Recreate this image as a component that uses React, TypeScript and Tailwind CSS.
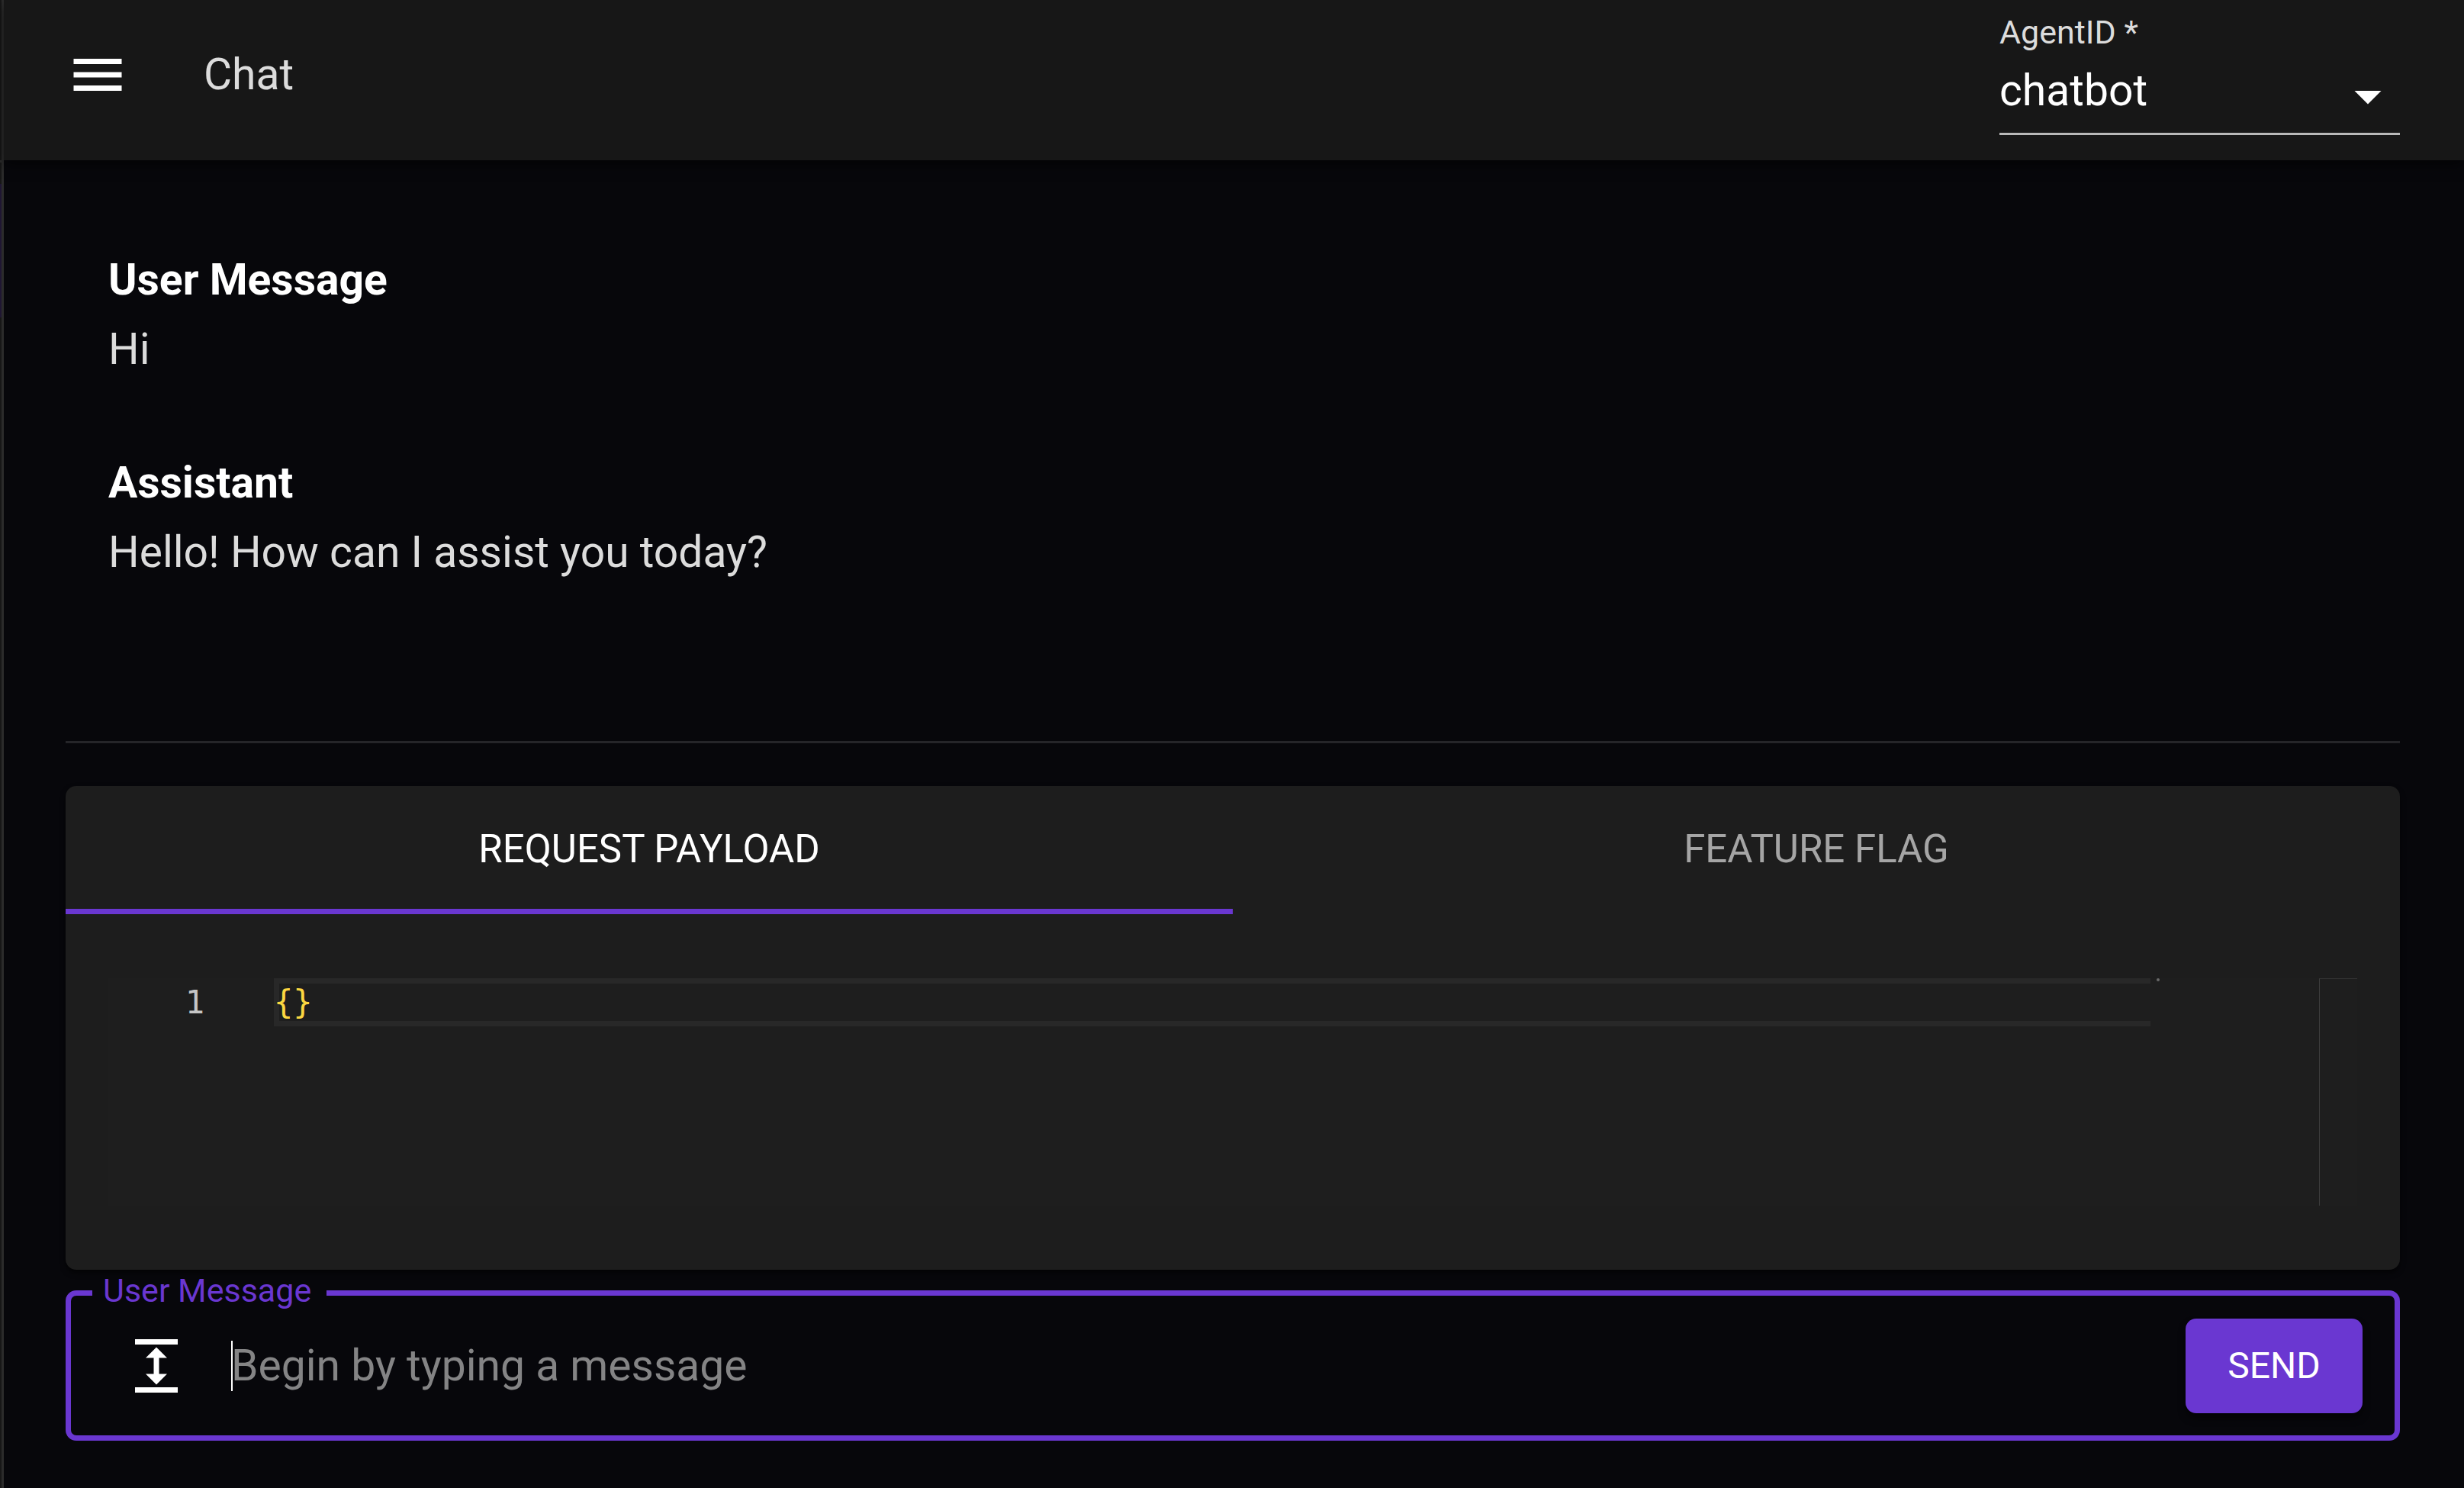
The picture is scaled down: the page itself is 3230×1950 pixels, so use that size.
import { useState } from "react";

function MenuIcon() {
  return (
    <svg viewBox="0 0 24 24" className="size-[84px] fill-white" aria-hidden="true">
      <path d="M3 18h18v-2H3v2zm0-5h18v-2H3v2zm0-7v2h18V6H3z" />
    </svg>
  );
}

function ArrowDropDownIcon() {
  return (
    <svg viewBox="0 0 24 24" className="pointer-events-none absolute right-0 bottom-[6px] size-[84px] fill-white" aria-hidden="true">
      <path d="M7 10l5 5 5-5z" />
    </svg>
  );
}

function ExpandIcon() {
  return (
    <svg viewBox="0 0 24 24" className="size-[84px] fill-white" aria-hidden="true">
      <path d="M4 20h16v2H4zM4 2h16v2H4zM13 9h3l-4-4-4 4h3v6H8l4 4 4-4h-3z" />
    </svg>
  );
}

function Header() {
  return (
    <header className="relative flex h-[210px] items-start justify-between bg-[#171717] pr-[84px] pl-[81px] shadow-[0_7px_14px_rgba(0,0,0,0.5)]">
      <div className="flex h-[196px] items-center gap-[97px]">
        <button type="button" aria-label="Open menu">
          <MenuIcon />
        </button>
        <h1 className="text-[57px] leading-[84px] text-[#dcdcdc]">Chat</h1>
      </div>
      <div className="relative mt-[12px] flex w-[525px] flex-col border-b-3 border-[#b9b9b9]">
        <label htmlFor="agent" className="text-[43px] leading-[60px] text-[#dcdcdc]">
          AgentID *
        </label>
        <select id="agent" required className="h-[102px] w-full appearance-none bg-transparent pb-[8px] text-[57px] leading-[84px] text-white outline-none">
          <option>chatbot</option>
        </select>
        <ArrowDropDownIcon />
      </div>
    </header>
  );
}

const messages = [
  { author: "User Message", text: "Hi" },
  { author: "Assistant", text: "Hello! How can I assist you today?" },
];

function Conversation() {
  return (
    <section className="flex flex-col gap-[84px] border-b-3 border-[#252529] px-[56px] pt-[111px] pb-[202px]">
      {messages.map((message) => (
        <article key={message.author} className="text-[57px] leading-[91px]">
          <h2 className="font-bold text-white">{message.author}</h2>
          <p className="text-[#dcdcdc]">{message.text}</p>
        </article>
      ))}
    </section>
  );
}

const tabs = ["Request Payload", "Feature Flag"];

function PayloadPanel() {
  const [active, setActive] = useState(0);
  return (
    <section className="rounded-[14px] bg-[#1d1d1d] shadow-[0_4px_7px_rgba(0,0,0,0.6)]">
      <div role="tablist" className="flex">
        {tabs.map((tab, index) => (
          <button
            key={tab}
            type="button"
            role="tab"
            aria-selected={index === active}
            onClick={() => setActive(index)}
            className="h-[168px] flex-1 border-b-7 border-transparent pt-1 text-[51px] leading-[60px] text-[#a5a5a5] uppercase aria-selected:border-[#6a37d1] aria-selected:text-white"
          >
            {tab}
          </button>
        ))}
      </div>
      <div className="px-[56px] py-[84px]">
        <div className="flex h-[298px] bg-[#1e1e1e] font-['DejaVu_Sans_Mono',monospace] text-[42px] leading-[63px]">
          <div className="w-[217px] pr-[91px] text-right text-[#c6c6c6]">1</div>
          <div className="relative h-[63px] flex-1 border-y-7 border-l-7 border-[#282828]">
            <code className="absolute -top-[7px] -left-[7px] font-['DejaVu_Sans_Mono',monospace] text-[#fbd741]">{"{}"}</code>
          </div>
          <div className="w-[221px] pl-2">
            <div className="size-1 rounded-full bg-[#6a6a6a]" />
          </div>
          <div className="w-[50px] border-t border-l border-t-[#333333] border-l-[#3c3c3c]" />
        </div>
      </div>
    </section>
  );
}

function Composer() {
  return (
    <form onSubmit={(event) => event.preventDefault()}>
      <fieldset className="h-[224px] rounded-[14px] border-7 border-[#6a37d1] pr-[42px] pl-[28px]">
        <legend className="h-[60px] pr-[20px] pl-[14px] text-[43px] leading-[54px] text-[#6a37d1]">
          <label htmlFor="message">User Message</label>
        </legend>
        <div className="mt-1 flex items-center">
          <button type="button" aria-label="Expand message" className="ml-[42px]">
            <ExpandIcon />
          </button>
          <div className="relative ml-[56px] flex-1">
            <input
              id="message"
              type="text"
              placeholder="Begin by typing a message"
              className="block h-[84px] w-full bg-transparent text-[57px] text-white outline-none placeholder:text-[#848485]"
            />
            <span className="absolute top-[9px] left-0 h-[66px] w-[2px] bg-white" />
          </div>
          <button
            type="submit"
            className="h-[124px] w-[232px] rounded-[14px] bg-[#6a37d1] text-[48px] text-white uppercase shadow-[0_7px_10px_rgba(0,0,0,0.5)]"
          >
            Send
          </button>
        </div>
      </fieldset>
    </form>
  );
}

export default function App() {
  return (
    <div className="flex min-h-screen bg-[#07070b] font-[Roboto,sans-serif]">
      <aside className="w-[5px] border-r-3 border-[#2b2b2b] bg-[#171717]">
        <div className="h-[210px]" />
        <div className="h-[31px] border-t-3 border-[#2b2b2b]" />
        <div className="h-[175px] bg-[#1f1633]" />
      </aside>
      <div className="min-w-0 flex-1">
        <Header />
        <main className="flex flex-col pr-[84px] pb-[56px] pl-[81px]">
          <Conversation />
          <div className="mt-[56px]">
            <PayloadPanel />
          </div>
          <Composer />
        </main>
      </div>
    </div>
  );
}
